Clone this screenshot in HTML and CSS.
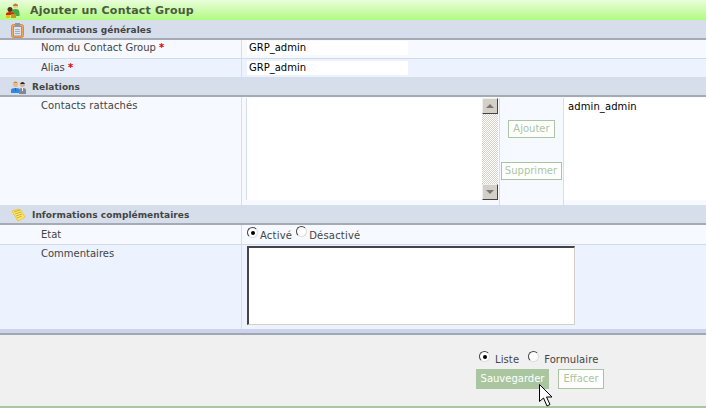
FILE: index.html
```html
<!DOCTYPE html>
<html lang="fr">
<head>
<meta charset="utf-8">
<title>Ajouter un Contact Group</title>
<link rel="stylesheet" href="styles.css">
</head>
<body>
<div class="title">
  <svg class="title-icon" width="16" height="15" viewBox="0 0 16 15"><circle cx="10.500" cy="3" r="2.500" fill="#f0c8a0"/><path d="M8 2q2.500-3 5 0v1H8z" fill="#b88828"/><path d="M7 13V8q0-2 3.500-2t3.500 2q1 2 .5 5z" fill="#48a848"/><circle cx="5" cy="6.500" r="2.500" fill="#5a3010"/><path d="M1 12v-1q0-2 4-2t4 2v1z" fill="#d02818"/><path d="M1 12h4v3H1z" fill="#e8c018"/><path d="M6 11h5v4H6z" fill="#c89810"/></svg>
  <span>Ajouter un Contact Group</span>
</div>
<div class="section">
  <span class="sec-icon"><svg width="13" height="15" viewBox="0 0 13 15"><rect x="0.500" y="1.500" width="12" height="13" rx="2" fill="#f4a860" stroke="#e08830"/><rect x="2.500" y="3.500" width="8" height="9.500" fill="#dfe4ea" stroke="#8a98a8"/><rect x="4" y="0" width="5" height="3" fill="#8a98a8"/><path d="M4 6.500h5M4 8.500h5M4 10.500h5" stroke="#a4aeba"/></svg></span>
  <span>Informations générales</span>
</div>
<div class="row odd r-one">
  <div class="label">Nom du Contact Group <em>*</em></div>
  <div class="value"><div class="text-field">GRP_admin</div></div>
</div>
<div class="row even r-two">
  <div class="label">Alias <em>*</em></div>
  <div class="value"><div class="text-field">GRP_admin</div></div>
</div>
<div class="section">
  <span class="sec-icon"><svg width="16" height="13" viewBox="0 0 16 13"><circle cx="4.500" cy="3.500" r="2.500" fill="#f0b880"/><path d="M2 2q2.500-3 5 0z" fill="#d08820"/><path d="M0 12V9q0-2 4.500-2T9 9v3z" fill="#3088e0"/><path d="M4 7h1v3H4z" fill="#d03020"/><circle cx="11.500" cy="3.500" r="2.500" fill="#d8b090"/><path d="M9 3q2.500-4 5 0z" fill="#202830"/><path d="M8 13V9q0-2 3.500-2T15 9v4z" fill="#808890"/><path d="M11 7h1v3h-1z" fill="#f0f0f0"/></svg></span>
  <span>Relations</span>
</div>
<div class="row odd r-rel">
  <div class="label">Contacts rattachés</div>
  <div class="value picker">
    <div class="listbox"></div>
    <div class="scrollbar">
      <span class="sb-btn"><svg width="8" height="5" viewBox="0 0 8 5"><path d="M4 0l4 4H0z" fill="#777"/></svg></span>
      <span class="sb-track"></span>
      <span class="sb-btn"><svg width="8" height="5" viewBox="0 0 8 5"><path d="M0 0h8L4 4z" fill="#777"/></svg></span>
    </div>
    <div class="actions">
      <span class="btn">Ajouter</span>
      <span class="btn">Supprimer</span>
    </div>
    <div class="selected">admin_admin</div>
  </div>
</div>
<div class="section">
  <span class="sec-icon"><svg width="15" height="13" viewBox="0 0 15 13"><path d="M1 2l8-2 5 8-7 4z" fill="#f8e878" stroke="#f0c830"/><path d="M3 3l6-2M4 5l6-2M5 7l6-2M6 9l5-2" stroke="#d8b030"/></svg></span>
  <span>Informations complémentaires</span>
</div>
<div class="row odd r-etat">
  <div class="label">Etat</div>
  <div class="value radios">
    <span class="radio on"></span><span class="r-text">Activé</span><span class="radio up"></span><span class="r-text">Désactivé</span>
  </div>
</div>
<div class="row even r-com">
  <div class="label">Commentaires</div>
  <div class="value"><div class="textarea"></div></div>
</div>
<div class="divider"></div>
<div class="footer">
  <div class="foot-radios">
    <span class="radio on"></span><span class="f-text">Liste</span><span class="radio"></span><span class="f-text">Formulaire</span>
  </div>
  <div class="foot-btns">
    <span class="btn solid">Sauvegarder</span>
    <span class="btn plain">Effacer</span>
  </div>
</div>
<div class="foot-line"></div>
<svg class="cursor" width="15" height="23" viewBox="0 0 15 23"><path d="M.5.500v17l4-3.500 3.500 8 3-1.500-3.500-7.500h5.500z" fill="#fff" stroke="#000"/></svg>
</body>
</html>
```
FILE: styles.css
```css
html, body { margin: 0; padding: 0; }
body {
  width: 706px;
  height: 408px;
  overflow: hidden;
  position: relative;
  background: #fff;
  font-family: "DejaVu Sans", Verdana, sans-serif;
  font-size: 10px;
  color: #444;
}
.title {
  height: 20px;
  display: flex;
  align-items: center;
  background: linear-gradient(#eafddc, #b0fb80);
  font-weight: bold;
  font-size: 11px;
  letter-spacing: 0.22px;
  color: #4a5a40;
}
.title-icon { margin: 0 9px 0 5px; flex: none; }
.section {
  height: 16px;
  padding-top: 2px;
  display: flex;
  align-items: center;
  background: #d5deea;
  border-bottom: 2px solid #a6aab2;
  font-weight: bold;
  font-size: 9px;
  letter-spacing: 0.05px;
  color: #444;
}
.sec-icon { width: 32px; padding-left: 11px; box-sizing: border-box; display: flex; }
.row { display: flex; }
.odd { background: #f6f9ff; }
.even { background: #ecf2fe; }
.r-one { height: 18px; border-bottom: 1px solid #d0daea; }
.r-two { height: 18px; }
.r-rel { height: 108px; }
.r-etat { height: 19px; border-bottom: 1px solid #d0daea; }
.r-com { height: 84px; }
.label {
  width: 200px;
  padding: 1px 0 0 41px;
  border-right: 1px solid #d5deea;
  line-height: 14px;
}
.r-two .label { padding-top: 2px; }
.r-rel .label { padding-top: 2px; letter-spacing: 0.1px; }
.r-etat .label { padding-top: 3px; }
.r-com .label { padding-top: 2px; }
.label em { color: #e00000; font-style: normal; font-weight: bold; }
.value { flex: 1; padding-left: 5px; }
.text-field {
  width: 161px;
  height: 14px;
  margin-top: 1px;
  box-sizing: border-box;
  background: #fff;
  color: #000;
  padding-left: 2px;
  line-height: 14px;
}
.r-two .text-field { margin-top: 2px; }
.picker { display: flex; padding: 1px 0 5px 4px; }
.listbox { width: 235px; background: #fff; border-left: 1px solid #d5deea; }
.scrollbar { width: 16px; display: flex; flex-direction: column; background: #fff; }
.sb-btn {
  height: 16px;
  flex: none;
  box-sizing: border-box;
  background: #d4d0c8;
  border: 1px solid;
  border-color: #eee #444 #444 #eee;
  display: flex;
  align-items: center;
  justify-content: center;
}
.sb-track {
  flex: 1;
  background: repeating-conic-gradient(#d4d0c8 0 25%, #fff 0 50%) 0 0 / 2px 2px;
}
.actions {
  width: 65px;
  margin-left: 1px;
  border-left: 1px solid #d5deea;
  border-right: 1px solid #d5deea;
  display: flex;
  flex-direction: column;
  align-items: center;
  gap: 24px;
  padding-top: 22px;
  box-sizing: border-box;
  margin-bottom: -5px;
  background: #f6f9ff;
}
.btn {
  display: block;
  box-sizing: border-box;
  border: 1px solid #a9c6a0;
  color: #a9c6a0;
  background: #fff;
  height: 18px;
  line-height: 16px;
}
.actions .btn { width: 47px; text-align: center; }
.actions .btn + .btn { width: 61px; margin-left: -1px; }
.selected { flex: 1; background: #fff; color: #000; padding: 2px 0 0 4px; line-height: 14px; letter-spacing: 0.1px; }
.radios { display: flex; align-items: flex-start; padding-top: 2px; }
.radio {
  width: 11px;
  height: 11px;
  flex: none;
  box-sizing: border-box;
  border-radius: 50%;
  background: #fff;
  border: 1px solid;
  border-color: #444 #ddd #ddd #444;
  position: relative;
}
.radio.up { margin-top: -1px; }
.radio.on::after {
  content: "";
  position: absolute;
  left: 2.500px;
  top: 2.500px;
  width: 4px;
  height: 4px;
  border-radius: 50%;
  background: #000;
}
.r-text { margin: 3px 4px 0 2px; line-height: 12px; letter-spacing: 0.2px; }
.textarea {
  width: 328px;
  height: 79px;
  box-sizing: border-box;
  margin-top: 1px;
  background: #fff;
  border: solid;
  border-color: #444 #d4d0c8 #d4d0c8 #444;
  border-width: 2px 1px 1px 2px;
}
.divider { height: 4px; background: #cdd2ee; border-bottom: 2px solid #a0a8b4; }
.footer {
  height: 71px;
  background: #f0f0f0;
  display: flex;
  flex-direction: column;
  padding: 16px 0 0 476px;
  box-sizing: border-box;
}
.foot-radios { display: flex; padding-left: 3px; }
.f-text { margin: 3px 8px 0 5px; line-height: 12px; letter-spacing: 0.1px; }
.f-text:last-child { margin-left: 5px; }
.foot-radios .radio + .f-text { margin-right: 9px; }
.foot-btns { display: flex; gap: 9px; margin-top: 3px; }
.btn.solid, .btn.plain { height: 20px; line-height: 18px; text-align: center; }
.btn.solid { width: 73px; background: #a9c6a0; color: #fff; }
.btn.plain { width: 46px; }
.foot-line { height: 2px; background: #a9c6a0; }
.cursor { position: absolute; left: 539px; top: 384px; }
```
